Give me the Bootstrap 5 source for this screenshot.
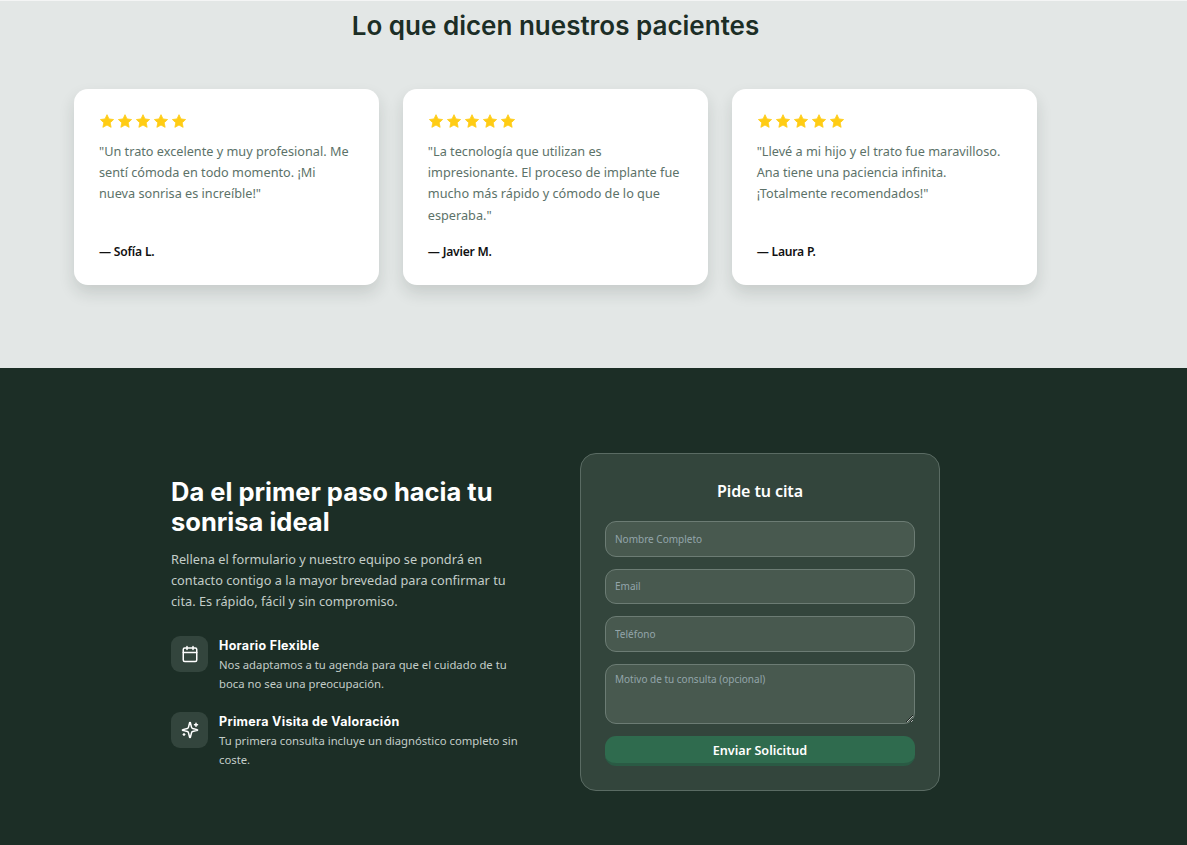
<!DOCTYPE html>
<html lang="es">
<head>
<meta charset="utf-8">
<title>Clínica dental</title>
<link href="https://cdn.jsdelivr.net/npm/bootstrap@5.3.0/dist/css/bootstrap.min.css" rel="stylesheet">
<style>
html,body{height:845px;overflow:hidden}
body{font-family:"Noto Sans","Open Sans",sans-serif;background:#1c2e26}
.top-band{background:#e3e7e6;height:368px;border-top:1px solid #f4f5f5}
.band-inner{width:963px;margin-left:74px}
.band-title{font-family:Inter,"Liberation Sans",sans-serif;font-weight:600;font-size:26px;line-height:30px;color:#1c2e26;margin:10px 0 48px;text-align:center}
.quote-grid{display:grid;grid-template-columns:repeat(3,1fr);gap:23.5px}
.quote-box{background:#fff;border-radius:14px;height:196px;padding:24px 25px 25px;box-shadow:0 8px 16px rgba(28,46,38,.14);display:flex;flex-direction:column}
.stars{display:flex;gap:2.1px;margin-bottom:12px;height:16px}
.stars svg{width:16px;height:16px;fill:#ffcc14;stroke:#ffcc14;stroke-width:1.2;stroke-linejoin:round;display:block}
.quote-text{font-size:12.7px;line-height:21.2px;color:#5c7269;margin:0;flex:1 1 auto}
.quote-author{font-size:12.1px;line-height:16px;font-weight:600;color:#111;margin:0;letter-spacing:-.2px}
.dark-band{height:477px;background:#1c2e26;padding-top:85px}
.dark-inner{margin-left:171px;width:769px;display:flex;justify-content:space-between;align-items:flex-start}
.pitch{width:355px;padding-top:23.5px}
.pitch-title{font-family:Inter,"Liberation Sans",sans-serif;font-weight:700;font-size:25.5px;line-height:30px;color:#fff;margin:0 0 12.5px}
.pitch-text{font-size:12.75px;line-height:21px;color:#c3cdc8;margin:0 0 24px}
.perk{display:flex;gap:11px;margin-bottom:19px}
.perk-icon{width:37px;height:36px;flex:none;border-radius:9px;background:#33453d;display:flex;align-items:center;justify-content:center;color:#fff}
.perk-title{font-family:Inter,"Liberation Sans",sans-serif;font-weight:700;font-size:12.5px;line-height:19px;color:#fff;margin:0;letter-spacing:.3px}
.perk-text{font-size:11.3px;line-height:19px;color:#c3cdc8;margin:0}
.form-panel{width:360px;height:338px;background:#33453c;border:1px solid #5a6b63;border-radius:16px;padding:25px 24px}
.form-title{font-size:16px;line-height:24px;font-weight:600;color:#fff;text-align:center;margin:0 0 18px;letter-spacing:-.1px}
.form-stack{display:flex;flex-direction:column;gap:12px}
.form-panel .form-control{height:35.6px;background:#48594f;border:1px solid #6c7c74;border-radius:11px;color:#fff;font-size:10px;padding:0 9px;box-shadow:none}
.form-panel textarea.form-control{height:60px;padding-top:7px;margin-top:0}
.form-panel .form-control::placeholder{color:#93a5aa;opacity:1}
.send-btn{height:30px;padding:1px 0 0;margin:0;background:#2f6b4e;border:0;border-bottom:3px solid #2a5a44;border-radius:11px;color:#fff;font-size:12.6px;font-weight:600;line-height:28px}
.send-btn:hover{background:#2f6b4e;color:#fff}
</style>
</head>
<body>
<section class="top-band">
  <div class="band-inner">
    <h2 class="band-title">Lo que dicen nuestros pacientes</h2>
    <div class="quote-grid">
      <div class="quote-box">
        <div class="stars"><svg viewBox="0 0 24 24"><path d="M12 2.5l3 6.4 6.9.9-5.1 4.8 1.4 6.9-6.2-3.4-6.2 3.4 1.4-6.9-5.1-4.8 6.9-.9z"/></svg><svg viewBox="0 0 24 24"><path d="M12 2.5l3 6.4 6.9.9-5.1 4.8 1.4 6.9-6.2-3.4-6.2 3.4 1.4-6.9-5.1-4.8 6.9-.9z"/></svg><svg viewBox="0 0 24 24"><path d="M12 2.5l3 6.4 6.9.9-5.1 4.8 1.4 6.9-6.2-3.4-6.2 3.4 1.4-6.9-5.1-4.8 6.9-.9z"/></svg><svg viewBox="0 0 24 24"><path d="M12 2.5l3 6.4 6.9.9-5.1 4.8 1.4 6.9-6.2-3.4-6.2 3.4 1.4-6.9-5.1-4.8 6.9-.9z"/></svg><svg viewBox="0 0 24 24"><path d="M12 2.5l3 6.4 6.9.9-5.1 4.8 1.4 6.9-6.2-3.4-6.2 3.4 1.4-6.9-5.1-4.8 6.9-.9z"/></svg></div>
        <p class="quote-text">"Un trato excelente y muy profesional. Me sentí cómoda en todo momento. ¡Mi nueva sonrisa es increíble!"</p>
        <p class="quote-author">— Sofía L.</p>
      </div>
      <div class="quote-box">
        <div class="stars"><svg viewBox="0 0 24 24"><path d="M12 2.5l3 6.4 6.9.9-5.1 4.8 1.4 6.9-6.2-3.4-6.2 3.4 1.4-6.9-5.1-4.8 6.9-.9z"/></svg><svg viewBox="0 0 24 24"><path d="M12 2.5l3 6.4 6.9.9-5.1 4.8 1.4 6.9-6.2-3.4-6.2 3.4 1.4-6.9-5.1-4.8 6.9-.9z"/></svg><svg viewBox="0 0 24 24"><path d="M12 2.5l3 6.4 6.9.9-5.1 4.8 1.4 6.9-6.2-3.4-6.2 3.4 1.4-6.9-5.1-4.8 6.9-.9z"/></svg><svg viewBox="0 0 24 24"><path d="M12 2.5l3 6.4 6.9.9-5.1 4.8 1.4 6.9-6.2-3.4-6.2 3.4 1.4-6.9-5.1-4.8 6.9-.9z"/></svg><svg viewBox="0 0 24 24"><path d="M12 2.5l3 6.4 6.9.9-5.1 4.8 1.4 6.9-6.2-3.4-6.2 3.4 1.4-6.9-5.1-4.8 6.9-.9z"/></svg></div>
        <p class="quote-text">"La tecnología que utilizan es impresionante. El proceso de implante fue mucho más rápido y cómodo de lo que esperaba."</p>
        <p class="quote-author">— Javier M.</p>
      </div>
      <div class="quote-box">
        <div class="stars"><svg viewBox="0 0 24 24"><path d="M12 2.5l3 6.4 6.9.9-5.1 4.8 1.4 6.9-6.2-3.4-6.2 3.4 1.4-6.9-5.1-4.8 6.9-.9z"/></svg><svg viewBox="0 0 24 24"><path d="M12 2.5l3 6.4 6.9.9-5.1 4.8 1.4 6.9-6.2-3.4-6.2 3.4 1.4-6.9-5.1-4.8 6.9-.9z"/></svg><svg viewBox="0 0 24 24"><path d="M12 2.5l3 6.4 6.9.9-5.1 4.8 1.4 6.9-6.2-3.4-6.2 3.4 1.4-6.9-5.1-4.8 6.9-.9z"/></svg><svg viewBox="0 0 24 24"><path d="M12 2.5l3 6.4 6.9.9-5.1 4.8 1.4 6.9-6.2-3.4-6.2 3.4 1.4-6.9-5.1-4.8 6.9-.9z"/></svg><svg viewBox="0 0 24 24"><path d="M12 2.5l3 6.4 6.9.9-5.1 4.8 1.4 6.9-6.2-3.4-6.2 3.4 1.4-6.9-5.1-4.8 6.9-.9z"/></svg></div>
        <p class="quote-text">"Llevé a mi hijo y el trato fue maravilloso. Ana tiene una paciencia infinita. ¡Totalmente recomendados!"</p>
        <p class="quote-author">— Laura P.</p>
      </div>
    </div>
  </div>
</section>
<section class="dark-band">
  <div class="dark-inner">
    <div class="pitch">
      <h2 class="pitch-title">Da el primer paso hacia tu sonrisa ideal</h2>
      <p class="pitch-text">Rellena el formulario y nuestro equipo se pondrá en contacto contigo a la mayor brevedad para confirmar tu cita. Es rápido, fácil y sin compromiso.</p>
      <div class="perk">
        <div class="perk-icon"><svg width="18" height="18" viewBox="0 0 24 24" fill="none" stroke="currentColor" stroke-width="2" stroke-linecap="round" stroke-linejoin="round"><rect x="3" y="4" width="18" height="18" rx="2"/><path d="M16 2v4M8 2v4M3 10h18"/></svg></div>
        <div><h3 class="perk-title">Horario Flexible</h3><p class="perk-text">Nos adaptamos a tu agenda para que el cuidado de tu boca no sea una preocupación.</p></div>
      </div>
      <div class="perk">
        <div class="perk-icon"><svg width="18" height="18" viewBox="0 0 24 24" fill="none" stroke="currentColor" stroke-width="2" stroke-linecap="round" stroke-linejoin="round"><path d="M9.9 15.5a2 2 0 0 0-1.4-1.4l-6.1-1.6a.5.5 0 0 1 0-1l6.1-1.6a2 2 0 0 0 1.4-1.4l1.6-6.1a.5.5 0 0 1 1 0l1.6 6.1a2 2 0 0 0 1.4 1.4l6.1 1.6a.5.5 0 0 1 0 1l-6.1 1.6a2 2 0 0 0-1.4 1.4l-1.6 6.1a.5.5 0 0 1-1 0z"/><path d="M20 3v4M22 5h-4M4 17v2M5 18H3"/></svg></div>
        <div><h3 class="perk-title">Primera Visita de Valoración</h3><p class="perk-text">Tu primera consulta incluye un diagnóstico completo sin coste.</p></div>
      </div>
    </div>
    <div class="form-panel">
      <h3 class="form-title">Pide tu cita</h3>
      <form class="form-stack">
        <input class="form-control" type="text" placeholder="Nombre Completo">
        <input class="form-control" type="email" placeholder="Email">
        <input class="form-control" type="tel" placeholder="Teléfono">
        <textarea class="form-control" placeholder="Motivo de tu consulta (opcional)"></textarea>
        <button class="btn send-btn" type="button">Enviar Solicitud</button>
      </form>
    </div>
  </div>
</section>
</body>
</html>
